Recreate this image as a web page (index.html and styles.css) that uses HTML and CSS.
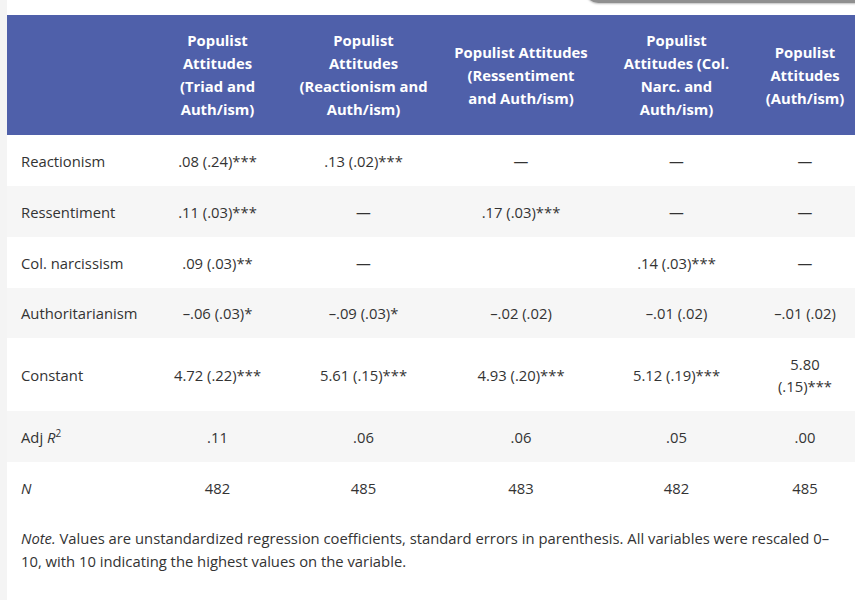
FILE: index.html
```html
<!DOCTYPE html>
<html lang="en">
<head>
<meta charset="utf-8">
<title>Regression table</title>
<link rel="stylesheet" href="styles.css">
</head>
<body>
<div class="page">
  <div class="toolbar-edge"></div>
  <div class="content">
    <div class="table-wrap">
      <table class="reg">
        <colgroup>
          <col class="c-label"><col class="c1"><col class="c2"><col class="c3"><col class="c4"><col class="c5">
        </colgroup>
        <thead>
          <tr>
            <th></th>
            <th>Populist<br>Attitudes<br>(Triad and<br>Auth/ism)</th>
            <th>Populist<br>Attitudes<br>(Reactionism and<br>Auth/ism)</th>
            <th>Populist Attitudes<br>(Ressentiment<br>and Auth/ism)</th>
            <th>Populist<br>Attitudes (Col.<br>Narc. and<br>Auth/ism)</th>
            <th>Populist<br>Attitudes<br>(Auth/ism)</th>
          </tr>
        </thead>
        <tbody>
          <tr>
            <td>Reactionism</td><td>.08 (.24)***</td><td>.13 (.02)***</td><td>—</td><td>—</td><td>—</td>
          </tr>
          <tr class="alt">
            <td>Ressentiment</td><td>.11 (.03)***</td><td>—</td><td>.17 (.03)***</td><td>—</td><td>—</td>
          </tr>
          <tr>
            <td>Col. narcissism</td><td>.09 (.03)**</td><td>—</td><td></td><td>.14 (.03)***</td><td>—</td>
          </tr>
          <tr class="alt short">
            <td>Authoritarianism</td><td>–.06 (.03)*</td><td>–.09 (.03)*</td><td>–.02 (.02)</td><td>–.01 (.02)</td><td>–.01 (.02)</td>
          </tr>
          <tr class="tall">
            <td>Constant</td><td>4.72 (.22)***</td><td>5.61 (.15)***</td><td>4.93 (.20)***</td><td>5.12 (.19)***</td><td>5.80<br>(.15)***</td>
          </tr>
          <tr class="alt">
            <td>Adj <i>R</i><sup>2</sup></td><td>.11</td><td>.06</td><td>.06</td><td>.05</td><td>.00</td>
          </tr>
          <tr>
            <td><i>N</i></td><td>482</td><td>485</td><td>483</td><td>482</td><td>485</td>
          </tr>
        </tbody>
      </table>
    </div>
    <p class="note"><i>Note.</i> Values are unstandardized regression coefficients, standard errors in parenthesis. All variables were rescaled 0–<br>10, with 10 indicating the highest values on the variable.</p>
  </div>
</div>
</body>
</html>
```

FILE: styles.css
```css
* { box-sizing: border-box; }

html, body {
  margin: 0;
  padding: 0;
  background: #ffffff;
}

body {
  font-family: "Open Sans", "Liberation Sans", sans-serif;
  color: #333333;
  width: 855px;
  height: 600px;
  overflow: hidden;
}

.page {
  position: relative;
  display: flex;
  height: 600px;
  border-left: 7px solid #f4f4f4;
}

.toolbar-edge {
  position: absolute;
  top: -24px;
  left: 578px;
  width: 300px;
  height: 27px;
  background: #8f8f8f;
  border-radius: 14px;
  box-shadow: 0 1px 2px rgba(0, 0, 0, 0.25);
}

.content {
  flex: 1;
  padding-top: 15px;
  min-width: 0;
}

.table-wrap {
  width: 848px;
  overflow: hidden;
}

.reg {
  border-collapse: collapse;
  table-layout: fixed;
  width: 855px;
  font-size: 14.8px;
  line-height: 22px;
}

.c-label { width: 138px; }
.c1 { width: 145px; }
.c2 { width: 147px; }
.c3 { width: 168px; }
.c4 { width: 143px; }
.c5 { width: 114px; }

.reg thead tr {
  background: #4f60aa;
  height: 120px;
}

.reg th {
  color: #ffffff;
  font-weight: 700;
  font-size: 14.8px;
  line-height: 23px;
  text-align: center;
  padding: 0 2px;
  vertical-align: middle;
  white-space: nowrap;
}

.reg tbody tr {
  height: 51px;
}

.reg tbody tr.short {
  height: 50px;
}

.reg tbody tr.tall {
  height: 73px;
}

.reg td {
  padding: 0 4px;
  text-align: center;
  vertical-align: middle;
  white-space: nowrap;
}

.reg td:first-child {
  text-align: left;
  padding-left: 14px;
}

.reg tr.alt {
  background: #f6f6f6;
}

.reg sup {
  font-size: 10px;
  line-height: 0;
  vertical-align: 6px;
}

.note {
  margin: 14px 0 0;
  padding: 0 0 0 14px;
  font-size: 14.8px;
  line-height: 23px;
  white-space: nowrap;
}
```
